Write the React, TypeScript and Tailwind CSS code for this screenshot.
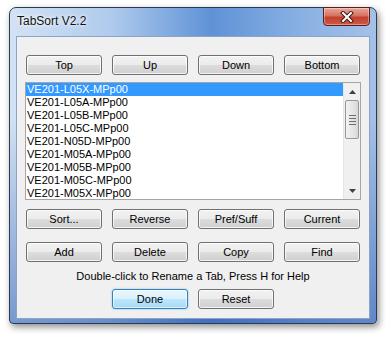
import type { ReactNode } from 'react';

const tabs = [
  'VE201-L05X-MPp00',
  'VE201-L05A-MPp00',
  'VE201-L05B-MPp00',
  'VE201-L05C-MPp00',
  'VE201-N05D-MPp00',
  'VE201-M05A-MPp00',
  'VE201-M05B-MPp00',
  'VE201-M05C-MPp00',
  'VE201-M05X-MPp00',
];

function WinButton({ children, primary = false }: { children: ReactNode; primary?: boolean }) {
  return (
    <button
      className={`flex h-[20px] w-[76px] items-center justify-center rounded-[3px] border text-[11px] leading-none text-black ${
        primary
          ? 'border-[#3c7fb1] bg-[linear-gradient(#eaf6fd_0%,#d9f0fc_50%,#bee6fd_50%,#a7d9f5_100%)] shadow-[inset_0_0_0_1px_rgba(255,255,255,0.6),0_0_2px_#5bc4f5]'
          : 'border-[#707070] bg-[linear-gradient(#f2f2f2_0%,#ebebeb_50%,#dddddd_50%,#cfcfcf_100%)] shadow-[inset_0_0_0_1px_rgba(255,255,255,0.75)]'
      }`}
    >
      {children}
    </button>
  );
}

function ButtonRow({ labels }: { labels: string[] }) {
  return (
    <div className="flex gap-[10px] px-[1px]">
      {labels.map((l) => (
        <WinButton key={l}>{l}</WinButton>
      ))}
    </div>
  );
}

function ScrollBar() {
  return (
    <div className="flex w-[17px] flex-col border-l border-[#e6e6e6] bg-[#f0f0f0]">
      <div className="flex h-[17px] items-center justify-center">
        <svg width="7" height="4" viewBox="0 0 7 4">
          <path d="M0 4 L3.5 0 L7 4 Z" fill="#404040" />
        </svg>
      </div>
      {/* thumb */}
      <div className="mx-[1px] flex h-[39px] flex-col items-center justify-center gap-[2px] rounded-[2px] border border-[#979797] bg-[linear-gradient(90deg,#f3f3f3,#e4e4e4_60%,#d6d6d6)]">
        <div className="h-px w-[7px] bg-[#6e6e6e]" />
        <div className="h-px w-[7px] bg-[#6e6e6e]" />
        <div className="h-px w-[7px] bg-[#6e6e6e]" />
        <div className="h-px w-[7px] bg-[#6e6e6e]" />
      </div>
      <div className="flex-1" />
      <div className="flex h-[17px] items-center justify-center">
        <svg width="7" height="4" viewBox="0 0 7 4">
          <path d="M0 0 L7 0 L3.5 4 Z" fill="#404040" />
        </svg>
      </div>
    </div>
  );
}

export default function App() {
  return (
    <div className="h-[338px] w-[386px] overflow-hidden bg-white pl-[9px] pt-[7px] font-['Liberation_Sans',Arial,sans-serif]">
      <div className="flex h-[317px] w-[368px] flex-col rounded-t-[7px] rounded-b-[4px] border border-[#2c3a52] bg-[linear-gradient(180deg,rgba(255,255,255,0)_35%,rgba(30,80,170,0.5)_100%),linear-gradient(90deg,#d3e2f4_0%,#aecaec_28%,#5f92d6_55%,#8ab1e3_80%,#a4c1e8_100%)] shadow-[2px_3px_7px_rgba(0,0,0,0.45)]">
        {/* title bar */}
        <div className="flex h-[28px] items-start">
          <div className="ml-[7px] mt-[6px] text-[12px] leading-[14px] text-[#111] [text-shadow:0_0_6px_#ffffff,0_0_3px_#ffffff]">
            TabSort V2.2
          </div>
          <div className="-mt-px ml-auto mr-[6px] flex h-[19px] w-[47px] items-center justify-center rounded-b-[4px] border border-[#5b1e18] bg-[linear-gradient(#e8a89c_0%,#d7715f_45%,#c3402d_55%,#cf5a44_100%)] shadow-[inset_0_0_0_1px_rgba(255,255,255,0.35)]">
            <svg width="14" height="12" viewBox="0 0 14 12">
              <path d="M3 2 L11 10 M11 2 L3 10" stroke="#3a1a1a" strokeWidth="4" strokeLinecap="square" />
              <path d="M3 2 L11 10 M11 2 L3 10" stroke="#ffffff" strokeWidth="2" strokeLinecap="square" />
            </svg>
          </div>
        </div>

        {/* client area */}
        <div className="mx-[6px] mb-[4px] flex flex-1 flex-col border border-[#8ea4c4] bg-[#f0f0f0] px-[8px]">
          <div className="mt-[18px]">
            <ButtonRow labels={['Top', 'Up', 'Down', 'Bottom']} />
          </div>

          {/* listbox */}
          <div className="mt-[7px] flex h-[118px] w-[336px] border border-[#a5a5a5] bg-white">
            <div className="flex-1 overflow-hidden">
              {tabs.map((t, i) => (
                <div
                  key={t}
                  className={`h-[13px] pl-[1px] text-[11px] leading-[13px] ${
                    i === 0 ? 'bg-[#3399ff] text-white' : 'text-black'
                  }`}
                >
                  {t}
                </div>
              ))}
            </div>
            <ScrollBar />
          </div>

          <div className="mt-[9px]">
            <ButtonRow labels={['Sort...', 'Reverse', 'Pref/Suff', 'Current']} />
          </div>
          <div className="mt-[13px]">
            <ButtonRow labels={['Add', 'Delete', 'Copy', 'Find']} />
          </div>

          <div className="mt-[7px] h-[14px] text-center text-[11px] leading-[14px] text-black">
            Double-click to Rename a Tab, Press H for Help
          </div>

          <div className="mt-[6px] flex justify-center gap-[10px]">
            <WinButton primary>Done</WinButton>
            <WinButton>Reset</WinButton>
          </div>
        </div>
      </div>
    </div>
  );
}
